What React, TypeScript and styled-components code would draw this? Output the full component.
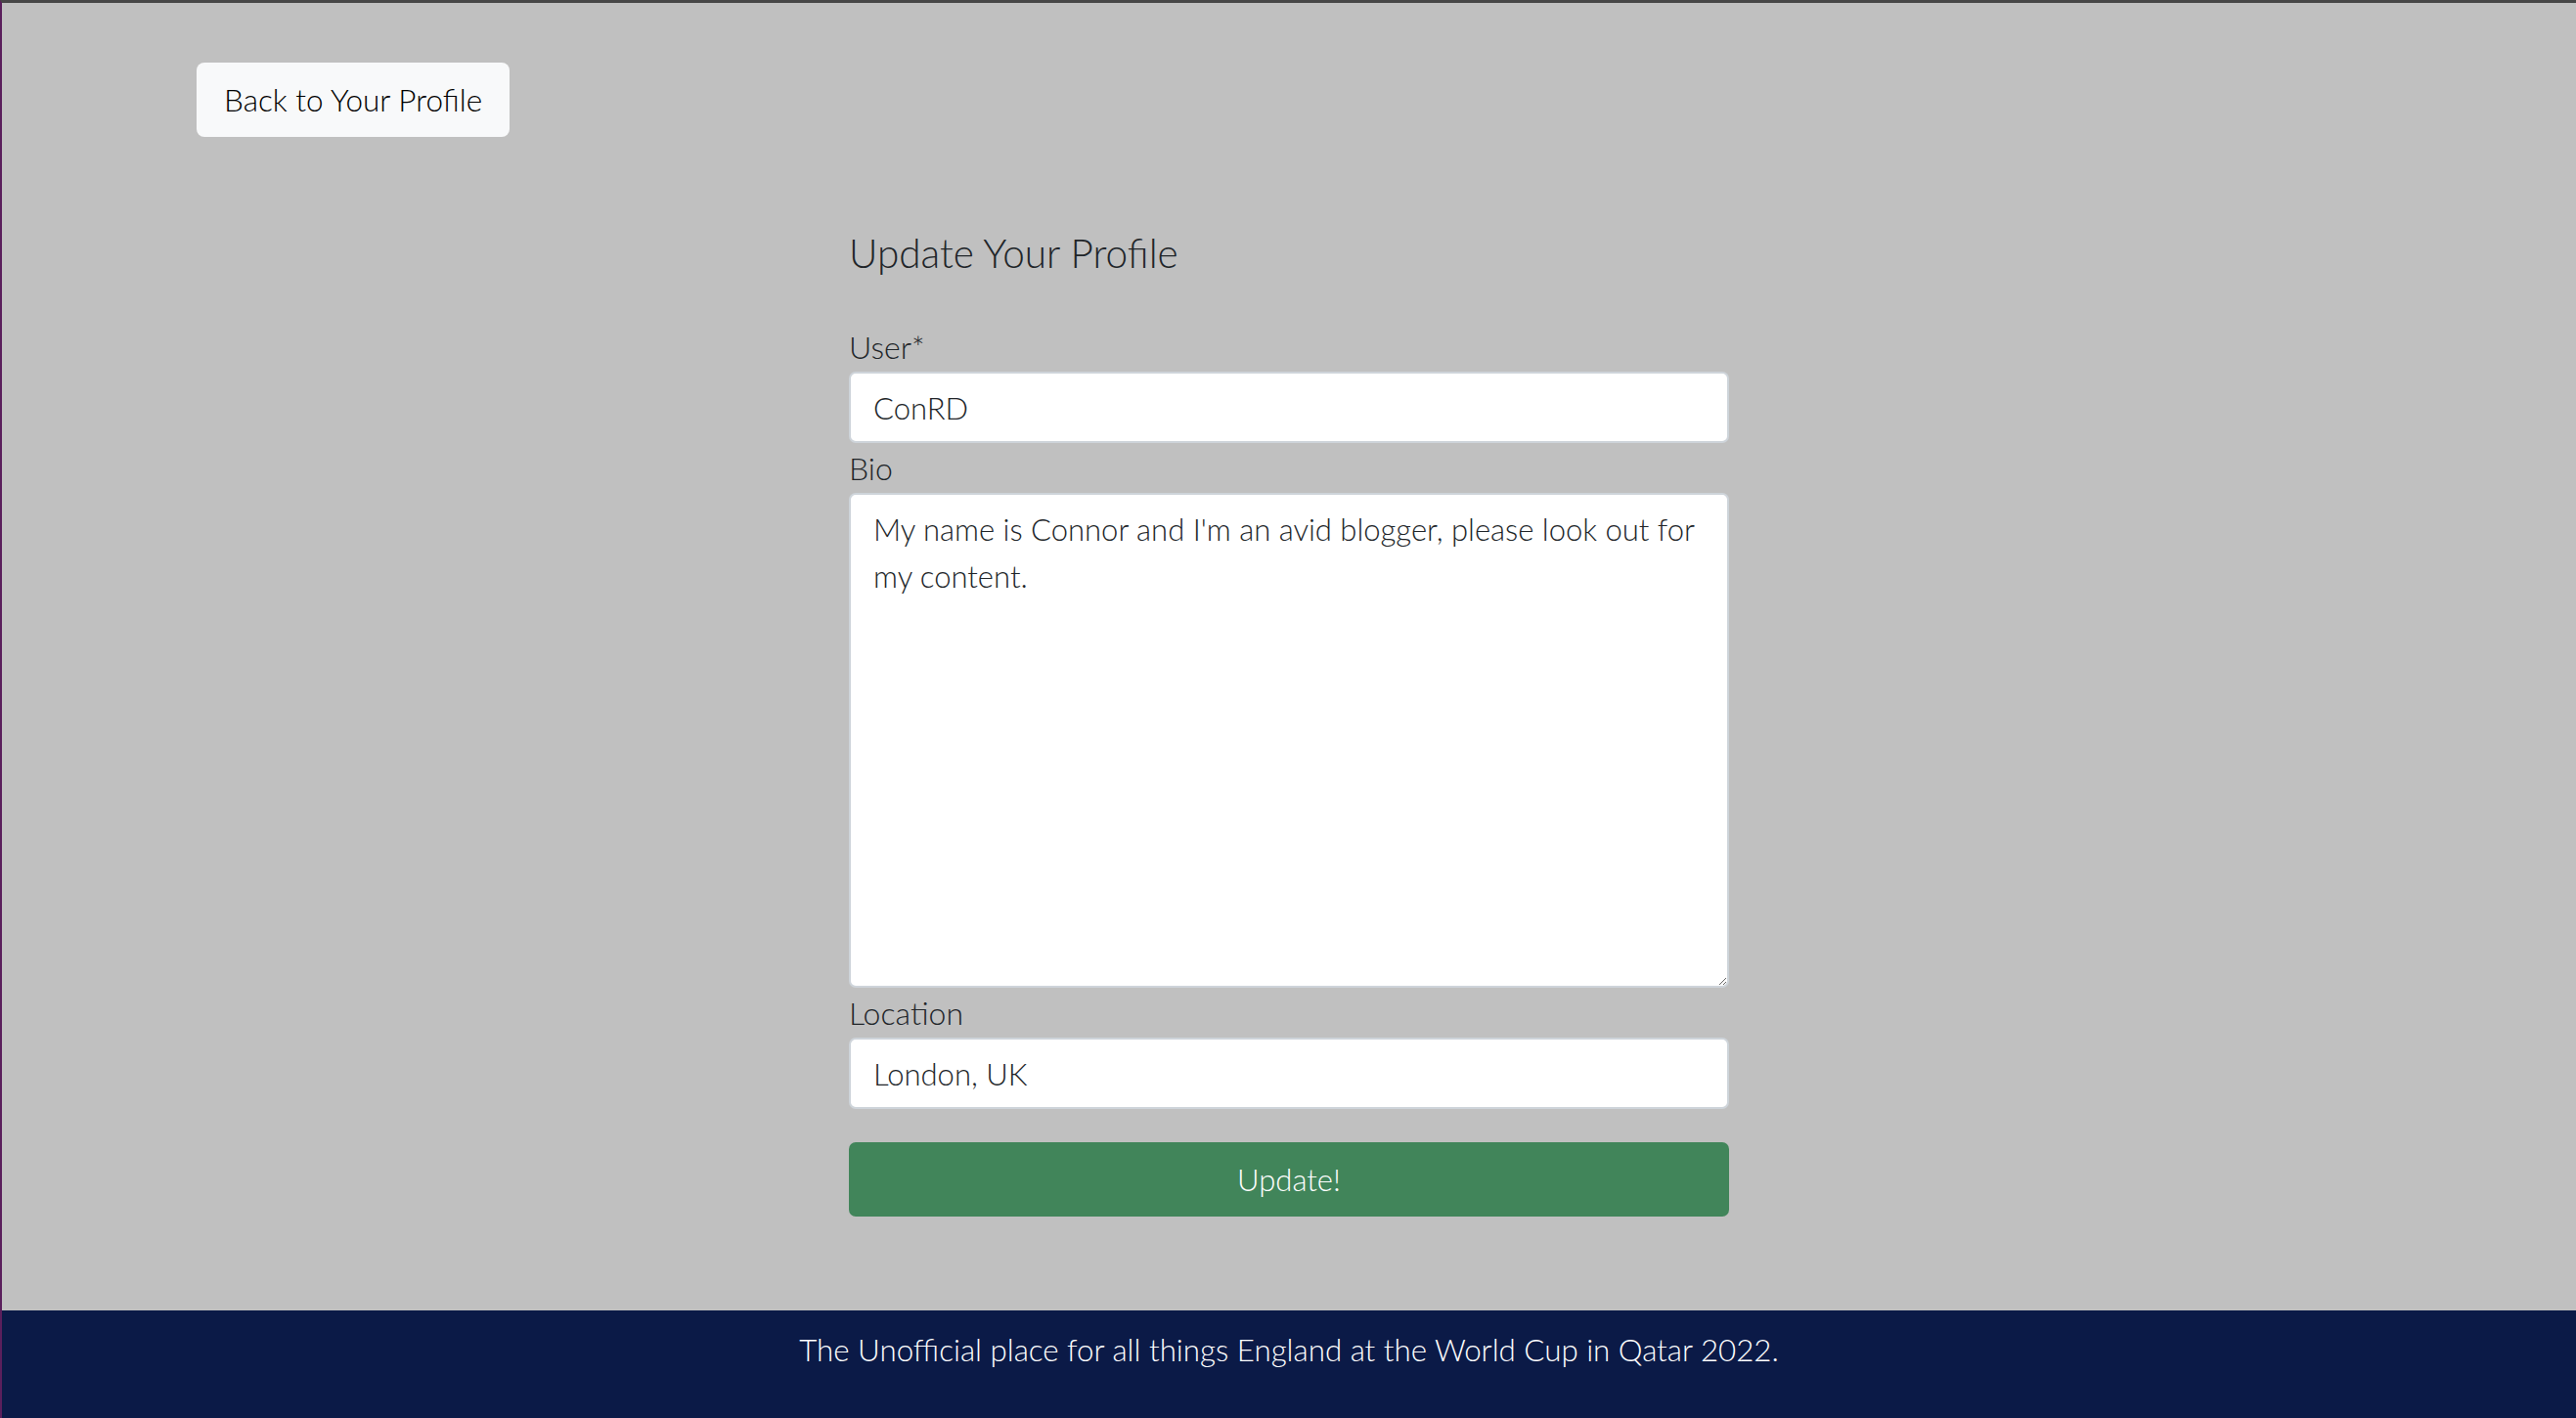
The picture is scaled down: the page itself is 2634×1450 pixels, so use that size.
import React from "react";
import styled, { createGlobalStyle } from "styled-components";

const GlobalStyle = createGlobalStyle`
  html, body {
    margin: 0;
    padding: 0;
  }
  body {
    font-family: Lato, "Noto Sans", sans-serif;
    font-weight: 300;
    color: #212529;
    background: #c0c0c0;
  }
  * { box-sizing: border-box; }
`;

const Page = styled.div`
  min-height: 100vh;
  display: flex;
  flex-direction: column;
  border-top: 3px solid #474747;
  border-left: 2px solid #5a1f5c;
`;

const Main = styled.main`
  flex: 1;
  background: #c0c0c0;
  padding: 61px 0 96px;
  display: flex;
  flex-direction: column;
`;

const TopBar = styled.div`
  display: flex;
  padding-left: 199px;
`;

const LightButton = styled.a`
  display: inline-flex;
  align-items: center;
  height: 76px;
  padding: 0 28px;
  background: #f8f9fa;
  border-radius: 8px;
  color: #000;
  font-size: 31.5px;
  font-weight: 300;
  text-decoration: none;
  cursor: pointer;
`;

const FormColumn = styled.form`
  width: 900px;
  margin: 94px auto 0;
  display: flex;
  flex-direction: column;
`;

const Title = styled.h4`
  margin: 0;
  font-size: 40.5px;
  font-weight: 300;
  line-height: 50px;
  color: #212529;
`;

const Label = styled.label<{ $first?: boolean }>`
  display: block;
  font-size: 32px;
  line-height: 38px;
  margin: ${(p) => (p.$first ? "52px" : "7px")} 0 6px;
`;

const fieldBase = `
  width: 100%;
  font-family: Lato, "Noto Sans", sans-serif;
  font-weight: 300;
  font-size: 31px;
  color: #212529;
  background: #fff;
  border: 2px solid #ced4da;
  border-radius: 7px;
  outline: none;
`;

const TextInput = styled.input`
  ${fieldBase}
  height: 73px;
  padding: 0 23px;
`;

const TextArea = styled.textarea`
  ${fieldBase}
  height: 506px;
  padding: 11px 23px 4px;
  line-height: 48px;
  resize: vertical;
`;

const SubmitButton = styled.button`
  margin-top: 34px;
  height: 76px;
  width: 100%;
  border: none;
  border-radius: 7px;
  background: #41855a;
  color: #fff;
  font-family: Lato, "Noto Sans", sans-serif;
  font-weight: 300;
  font-size: 31px;
  cursor: pointer;
`;

const Footer = styled.footer`
  height: 110px;
  background: #0b1a47;
  color: #fff;
  text-align: center;
  font-size: 31.3px;
  font-weight: 300;
  line-height: 48px;
  padding-top: 16px;
`;

export default function App() {
  return (
    <>
      <GlobalStyle />
      <Page>
        <Main>
          <TopBar>
            <LightButton>Back to Your Profile</LightButton>
          </TopBar>
          <FormColumn onSubmit={(e) => e.preventDefault()}>
            <Title>Update Your Profile</Title>
            <Label $first htmlFor="user">User*</Label>
            <TextInput id="user" defaultValue="ConRD" />
            <Label htmlFor="bio">Bio</Label>
            <TextArea
              id="bio"
              defaultValue="My name is Connor and I'm an avid blogger, please look out for my content."
            />
            <Label htmlFor="location">Location</Label>
            <TextInput id="location" defaultValue="London, UK" />
            <SubmitButton type="submit">Update!</SubmitButton>
          </FormColumn>
        </Main>
        <Footer>The Unofficial place for all things England at the World Cup in Qatar 2022.</Footer>
      </Page>
    </>
  );
}
